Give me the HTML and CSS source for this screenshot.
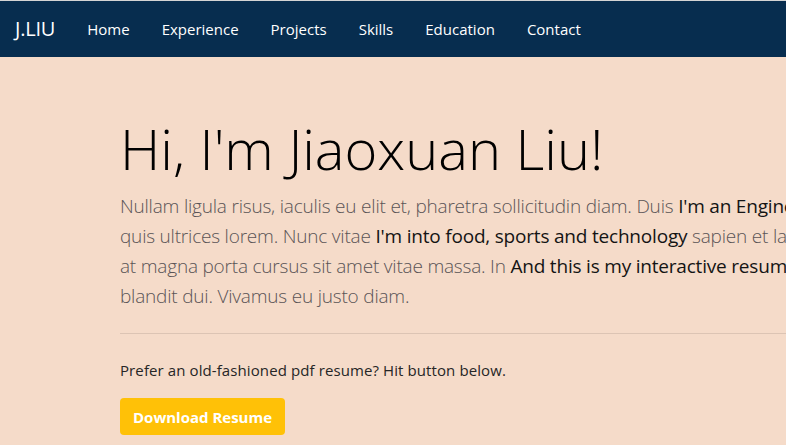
FILE: index.html
```html
<!DOCTYPE html>
<html lang="en">
<head>
<meta charset="utf-8">
<title>J.LIU</title>
<link rel="stylesheet" href="styles.css">
</head>
<body>
<nav class="navbar">
  <a class="brand" href="#">J.LIU</a>
  <ul class="nav">
    <li><a href="#">Home</a></li>
    <li><a href="#">Experience</a></li>
    <li><a href="#">Projects</a></li>
    <li><a href="#">Skills</a></li>
    <li><a href="#">Education</a></li>
    <li><a href="#">Contact</a></li>
  </ul>
</nav>
<main class="hero">
  <div class="container">
    <h1 class="display">Hi, I'm Jiaoxuan Liu!</h1>
    <p class="lead">
      <span class="line">Nullam ligula risus, iaculis eu elit et, pharetra sollicitudin diam. Duis <span class="hl">I'm an Engineer</span> nec tortor fringilla</span>
      <span class="line">quis ultrices lorem. Nunc vitae <span class="hl">I'm into food, sports and technology</span> sapien et lacinia mauris,</span>
      <span class="line">at magna porta cursus sit amet vitae massa. In <span class="hl">And this is my interactive resume</span> nibh</span>
      <span class="line">blandit dui. Vivamus eu justo diam.</span>
    </p>
    <hr class="divider">
    <p class="note">Prefer an old-fashioned pdf resume? Hit button below.</p>
    <a class="btn" href="#">Download Resume</a>
  </div>
</main>
</body>
</html>
```
FILE: styles.css
```css
html, body {
  margin: 0;
  padding: 0;
}
body {
  font-family: "Open Sans", "Noto Sans", sans-serif;
  background: #f5dbc9;
  color: #212529;
  overflow: hidden;
  height: 445px;
}
a { text-decoration: none; }

.navbar {
  display: flex;
  align-items: center;
  height: 56px;
  border-top: 1px solid #d4d4d4;
  background: #072d4f;
  padding: 0 16px 0 15px;
}
.brand {
  color: #fff;
  font-size: 20px;
  line-height: 24px;
  margin-right: 16px;
  letter-spacing: -0.2px;
}
.nav {
  display: flex;
  list-style: none;
  margin: 0;
  padding: 0;
}
.nav a {
  display: block;
  color: #fff;
  font-size: 15px;
  line-height: 26px;
  padding: 0 16px;
}

.hero {
  padding-top: 58px;
}
.container {
  margin-left: 120px;
  width: 1100px;
}
.display {
  font-size: 56px;
  font-weight: 300;
  line-height: 67px;
  margin: 0 0 9px;
  color: #000;
}
.lead {
  margin: 0;
  font-size: 19px;
  font-weight: 300;
  line-height: 30px;
  letter-spacing: -0.2px;
  color: #5a5456;
}
.line {
  display: block;
  white-space: nowrap;
}
.hl {
  font-weight: 400;
  color: #141414;
}
.divider {
  margin: 22px 0 0;
  border: 0;
  border-top: 1px solid rgba(0, 0, 0, 0.1);
}
.note {
  margin: 24px 0 16px;
  font-size: 15px;
  line-height: 24px;
  letter-spacing: 0.1px;
  color: #262626;
}
.btn {
  display: inline-block;
  background: #ffc107;
  color: #fff;
  font-weight: 700;
  font-size: 15px;
  line-height: 24px;
  padding: 7px 13px 6px;
  border-radius: 4px;
}
```
